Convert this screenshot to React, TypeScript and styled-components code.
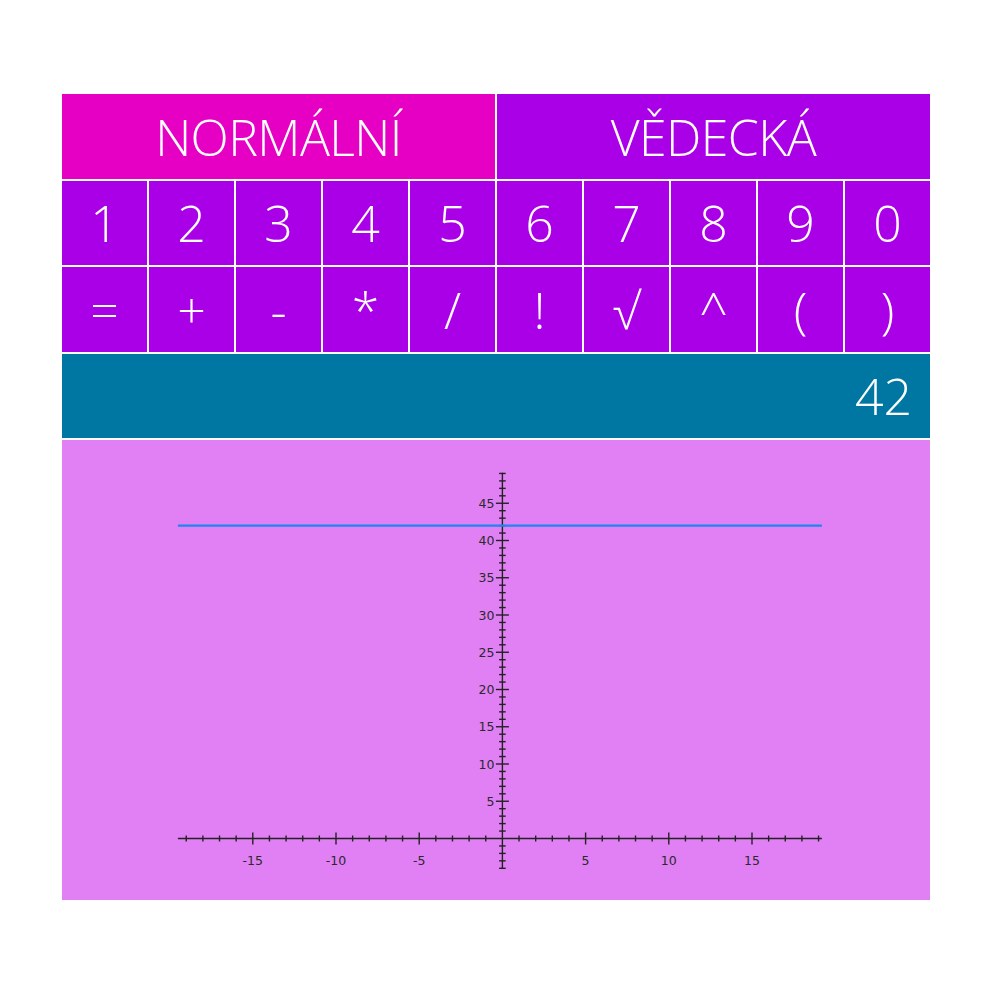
import React from "react";
import styled, { createGlobalStyle } from "styled-components";

const GlobalStyle = createGlobalStyle`
  html, body {
    margin: 0;
    padding: 0;
    background: #fff;
  }
  body {
    font-family: "Open Sans", "Noto Sans", sans-serif;
  }
`;

const keysTop = ["1", "2", "3", "4", "5", "6", "7", "8", "9", "0"];
const keysBottom = ["=", "+", "-", "*", "/", "!", "√", "^", "(", ")"];

// graph geometry (px inside the svg)
const W = 868;
const H = 460;
const OX = 440.4;
const OY = 398.5;
const UX = 16.64;
const UY = 7.45;
const VALUE = 42;

function Graph() {
  const xTicks: number[] = [];
  for (let i = -19; i <= 19; i++) xTicks.push(i);
  const yTicks: number[] = [];
  for (let i = -4; i <= 49; i++) yTicks.push(i);

  const left = OX - 19.5 * UX;
  const right = OX + 19.2 * UX;

  return (
    <svg width={W} height={H} viewBox={`0 0 ${W} ${H}`}>
      <g stroke="#222" strokeWidth={1.4}>
        <line x1={left} y1={OY} x2={right} y2={OY} />
        <line x1={OX} y1={OY - 49.1 * UY} x2={OX} y2={OY + 4 * UY} />
        {xTicks.map((i) => {
          if (i === 0) return null;
          const x = OX + i * UX;
          const s = i % 5 === 0 ? 6 : 3;
          return <line key={"x" + i} x1={x} y1={OY - s} x2={x} y2={OY + s} />;
        })}
        {yTicks.map((i) => {
          if (i === 0) return null;
          const y = OY - i * UY;
          const s = i % 5 === 0 ? 6.5 : 3.3;
          return <line key={"y" + i} x1={OX - s} y1={y} x2={OX + s} y2={y} />;
        })}
      </g>
      <g fill="#2a2a2a" fontSize={12.5} fontFamily="'DejaVu Sans', sans-serif">
        {xTicks
          .filter((i) => i !== 0 && i % 5 === 0)
          .map((i) => (
            <text key={"lx" + i} x={OX + i * UX} y={OY + 26} textAnchor="middle">
              {i}
            </text>
          ))}
        {yTicks
          .filter((i) => i > 0 && i % 5 === 0)
          .map((i) => (
            <text key={"ly" + i} x={OX - 8} y={OY - i * UY + 4.5} textAnchor="end">
              {i}
            </text>
          ))}
      </g>
      <line
        x1={left}
        y1={OY - VALUE * UY}
        x2={right}
        y2={OY - VALUE * UY}
        stroke="#1a88f0"
        strokeWidth={2.2}
      />
    </svg>
  );
}

export default function App() {
  return (
    <>
      <GlobalStyle />
      <Calculator>
        <Tabs>
          <Tab $active>NORMÁLNÍ</Tab>
          <Tab>VĚDECKÁ</Tab>
        </Tabs>
        <KeyRow>
          {keysTop.map((k) => (
            <Key key={k}>{k}</Key>
          ))}
        </KeyRow>
        <KeyRow $tall>
          {keysBottom.map((k) => (
            <Key key={k}>{k}</Key>
          ))}
        </KeyRow>
        <Display>42</Display>
        <GraphPanel>
          <Graph />
        </GraphPanel>
      </Calculator>
    </>
  );
}

const Calculator = styled.div`
  width: 868px;
  margin: 94px 0 0 62px;
  display: flex;
  flex-direction: column;
  gap: 2px;
  background: #fff;
`;

const Tabs = styled.div`
  display: grid;
  grid-template-columns: 1fr 1fr;
  gap: 2px;
  height: 85px;
`;

const Tab = styled.div<{ $active?: boolean }>`
  display: flex;
  align-items: center;
  justify-content: center;
  background: ${(p) => (p.$active ? "#e600c3" : "#aa00e8")};
  color: #fff;
  font-size: 50px;
  font-weight: 300;
  letter-spacing: -0.6px;
`;

const KeyRow = styled.div<{ $tall?: boolean }>`
  display: grid;
  grid-template-columns: repeat(10, 85px);
  gap: 2px;
  height: ${(p) => (p.$tall ? "85px" : "84px")};
`;

const Key = styled.div`
  display: flex;
  align-items: center;
  justify-content: center;
  background: #aa00e8;
  color: #fff;
  font-size: 50px;
  font-weight: 300;
`;

const Display = styled.div`
  height: 84px;
  display: flex;
  align-items: center;
  justify-content: flex-end;
  padding-right: 18px;
  background: #0077a3;
  color: #fff;
  font-size: 50px;
  font-weight: 300;
`;

const GraphPanel = styled.div`
  height: 460px;
  background: #e080f4;
  line-height: 0;
`;
